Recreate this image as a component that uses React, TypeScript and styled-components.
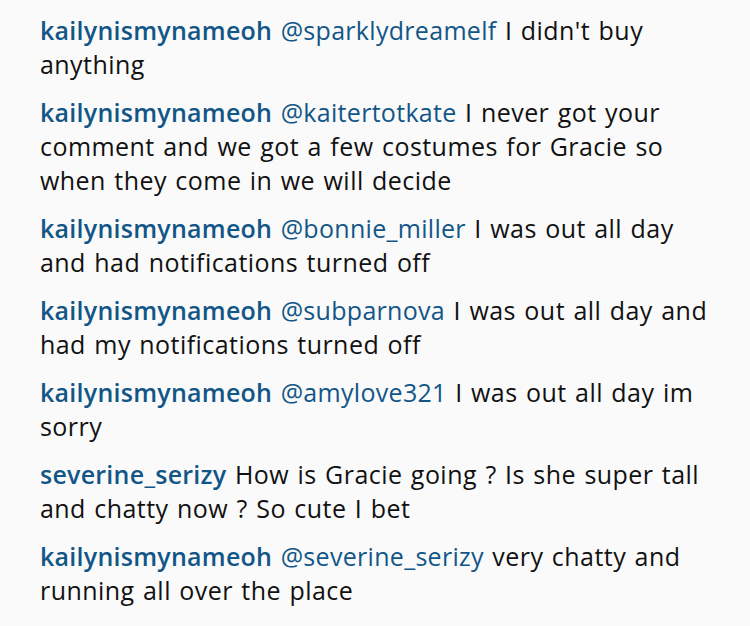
import React from "react";
import styled, { createGlobalStyle } from "styled-components";

const GlobalStyle = createGlobalStyle`
  html, body {
    margin: 0;
    padding: 0;
    background: #fafafa;
  }
`;

const Wrapper = styled.div`
  width: 750px;
  height: 626px;
  box-sizing: border-box;
  padding: 13px 0 0 40px;
  background: #fafafa;
  overflow: hidden;
  display: flex;
  flex-direction: column;
  gap: 14px;
`;

const Comment = styled.div`
  font-family: "Open Sans", Lato, sans-serif;
  font-size: 25px;
  line-height: 34px;
  letter-spacing: 0.45px;
  word-spacing: 1.5px;
  color: #111111;
  white-space: nowrap;
`;

const User = styled.span`
  color: #125688;
  font-weight: 600;
  letter-spacing: 0.25px;
`;

const Mention = styled.span`
  color: #125688;
  letter-spacing: 0.3px;
`;

interface CommentData {
  user: string;
  mention?: string;
  lines: string[];
}

const comments: CommentData[] = [
  {
    user: "kailynismynameoh",
    mention: "@sparklydreamelf",
    lines: ["I didn't buy", "anything"],
  },
  {
    user: "kailynismynameoh",
    mention: "@kaitertotkate",
    lines: [
      "I never got your",
      "comment and we got a few costumes for Gracie so",
      "when they come in we will decide",
    ],
  },
  {
    user: "kailynismynameoh",
    mention: "@bonnie_miller",
    lines: ["I was out all day", "and had notifications turned off"],
  },
  {
    user: "kailynismynameoh",
    mention: "@subparnova",
    lines: ["I was out all day and", "had my notifications turned off"],
  },
  {
    user: "kailynismynameoh",
    mention: "@amylove321",
    lines: ["I was out all day im", "sorry"],
  },
  {
    user: "severine_serizy",
    lines: ["How is Gracie going ? Is she super tall", "and chatty now ? So cute I bet"],
  },
  {
    user: "kailynismynameoh",
    mention: "@severine_serizy",
    lines: ["very chatty and", "running all over the place"],
  },
];

const App = () => {
  return (
    <>
      <GlobalStyle />
      <Wrapper>
        {comments.map((c, i) => (
          <Comment key={i}>
            <User>{c.user}</User>{" "}
            {c.mention && (
              <>
                <Mention>{c.mention}</Mention>{" "}
              </>
            )}
            {c.lines.map((line, j) => (
              <React.Fragment key={j}>
                {j > 0 && <br />}
                {line}
              </React.Fragment>
            ))}
          </Comment>
        ))}
      </Wrapper>
    </>
  );
};

export default App;
